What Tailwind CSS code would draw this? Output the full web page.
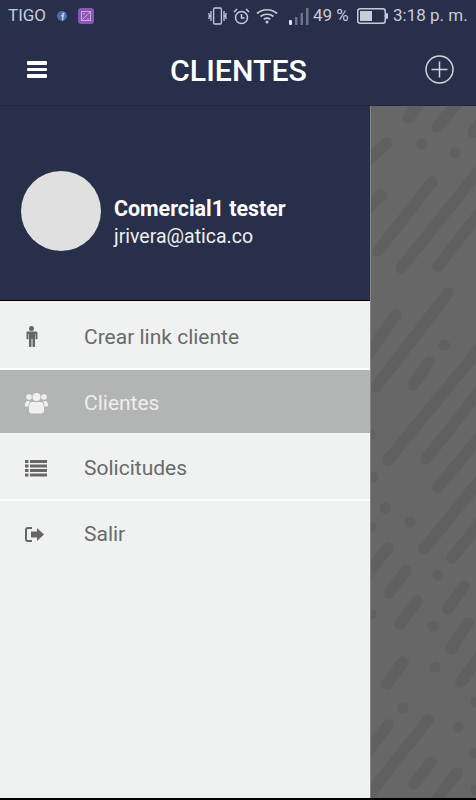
<!DOCTYPE html>
<html lang="es">
<head>
    <meta charset="UTF-8">
    <meta name="viewport" content="width=device-width, initial-scale=1.0">
    <title>Clientes</title>
    <script src="https://cdn.jsdelivr.net/npm/@tailwindcss/browser@4"></script>
</head>
<body class="bg-black font-['Roboto',sans-serif]">
    <div class="w-[476px] h-[798px] flex flex-col overflow-hidden">
        <!-- Status bar + toolbar -->
        <header class="h-[106px] shrink-0 bg-[#272f4a] border-b border-[#222a42]">
            <div class="h-8 flex items-center text-[#c9ccd6] text-[17px] pl-2 pr-2">
                <span class="w-[38px]">TIGO</span>
                <svg class="ml-[11px]" width="10" height="10" viewBox="0 0 10 10"><circle cx="5" cy="5" r="5" fill="#4a6cae"/><path d="M5.2 9.5V5.6H4.2V4.2h1V3.3c0-1 .6-1.5 1.5-1.5h.8v1.3h-.6c-.4 0-.5.2-.5.5v.6h1.1l-.2 1.4h-.9v3.9z" fill="#d5dbe8"/></svg>
                <svg class="ml-[11px]" width="16" height="16" viewBox="0 0 16 16"><rect width="16" height="16" rx="3" fill="#8a56b8"/><rect x="3.5" y="3.5" width="9" height="9" fill="none" stroke="#c5a9dd"/><path d="M4 12l8-8M5 6h2M9 11h2" stroke="#c5a9dd"/></svg>
                <svg class="ml-[114px]" width="19" height="18" viewBox="0 0 19 18" fill="none" stroke="#c9ccd6" stroke-width="1.3"><rect x="5.6" y="1" width="7.8" height="16" rx="1.2"/><path d="M3 4v10M1 6l0 2 1 1-1 1 0 2M16 4v10M18 6v2l-1 1 1 1v2"/></svg>
                <svg class="ml-[6px]" width="17" height="17" viewBox="0 0 17 17" fill="none" stroke="#c9ccd6" stroke-width="1.5"><circle cx="8.5" cy="9.5" r="6"/><path d="M8.5 6v4h3M1 4l3-3M16 4l-3-3"/></svg>
                <svg class="ml-[6px]" width="22" height="16" viewBox="0 0 22 16" fill="none" stroke="#c9ccd6" stroke-width="1.7"><path d="M1 5.5c5.500-5 14.500-5 20 0M4.500 8.500c3.500-3 9.500-3 13 0M7.800 11.300c2-1.500 4.400-1.500 6.400 0"/><circle cx="11" cy="14" r="1.500" fill="#c9ccd6" stroke="none"/></svg>
                <svg class="ml-[11px]" width="20" height="17" viewBox="0 0 20 17"><rect x="0" y="12" width="3" height="5" rx="1" fill="#e4e6ec"/><rect x="6" y="9" width="2.500" height="8" fill="#6e7488"/><rect x="11.500" y="5" width="2.500" height="12" fill="#6e7488"/><rect x="17" y="0" width="2.500" height="17" fill="#6e7488"/></svg>
                <span class="ml-[4px] w-[38px] whitespace-nowrap">49 %</span>
                <svg class="ml-[6px]" width="31" height="16" viewBox="0 0 31 16"><rect x="0.750" y="0.750" width="27.500" height="14.500" rx="2.500" fill="none" stroke="#c9ccd6" stroke-width="1.500"/><rect x="3" y="3" width="12" height="10" fill="#c9ccd6"/><rect x="29" y="5" width="2" height="6" rx="1" fill="#c9ccd6"/></svg>
                <span class="ml-[5px] whitespace-nowrap">3:18 p. m.</span>
            </div>
            <div class="h-[73px] grid grid-cols-[1fr_auto_1fr] items-center pl-[27px] pr-[22px]">
                <div class="w-5 mt-[2px] flex flex-col gap-[3px]">
                    <div class="h-[3.500px] rounded-[1px] bg-white"></div>
                    <div class="h-[3.500px] rounded-[1px] bg-white"></div>
                    <div class="h-[3.500px] rounded-[1px] bg-white"></div>
                </div>
                <h1 class="text-white text-[30.300px] font-medium leading-none mt-[5px] -ml-[5px] pl-[1px]">CLIENTES</h1>
                <svg class="justify-self-end mt-[1px]" width="29" height="29" viewBox="0 0 29 29" fill="none" stroke="#d4d5da" stroke-width="1.500"><circle cx="14.500" cy="14.500" r="13.500"/><path d="M14.500 6.500v16M6.500 14.500h16"/></svg>
            </div>
        </header>

        <div class="flex-1 flex min-h-0">
            <!-- Drawer -->
            <aside class="w-[370px] shrink-0 flex flex-col bg-[#f0f2f1]">
                <div class="h-[195px] bg-[#272f4a] flex items-center pl-[21px] pt-4 gap-[13px] border-b border-black">
                    <div class="w-20 h-20 rounded-full bg-[#e0e0e0]"></div>
                    <div class="text-white pt-6">
                        <div class="text-[21.400px] font-bold leading-6">Comercial1 tester</div>
                        <div class="text-[19.500px] leading-6 mt-1 text-[#f0f0f0]">jrivera@atica.co</div>
                    </div>
                </div>
                <nav class="text-[21px] text-[#6a6a6a]">
                    <a class="h-[69px] pt-1 flex items-center border-b-2 border-white">
                        <span class="w-[84px] pl-[25px]">
                            <svg width="13" height="21" viewBox="0 0 13 21" fill="#666666"><circle cx="6.500" cy="2.500" r="2.500"/><path d="M2 5.500h9a1.500 1.500 0 0 1 1.500 1.500v5.500a1 1 0 0 1-2 0V8h-.5v12a1 1 0 0 1-2.500 0v-7h-1v7a1 1 0 0 1-2.500 0V8h-.5v4.500a1 1 0 0 1-2 0V7A1.500 1.500 0 0 1 2 5.500z"/></svg>
                        </span>
                        <span class="mt-[2px]">Crear link cliente</span>
                    </a>
                    <a class="h-[65px] pt-[2px] flex items-center bg-[#b3b5b4] border-b-2 border-[#f4f5f5] text-[#eeeeee]">
                        <span class="w-[84px] pl-[25px]">
                            <svg width="23" height="22" viewBox="0 0 23 22" fill="#f0f0f0"><circle cx="4" cy="5" r="2.800"/><circle cx="19" cy="5" r="2.800"/><circle cx="11.500" cy="5" r="4"/><path d="M0 13.500c0-3 1-4.500 3-4.500l2 .5c-1 1-1.500 3-1.500 5H1c-.6 0-1-.4-1-1zM23 13.500c0-3-1-4.500-3-4.500l-2 .5c1 1 1.500 3 1.500 5H22c.6 0 1-.4 1-1zM7 10h9c2 0 3 2 3 6v3c0 1.500-1 2.500-2.500 2.500h-10C5 21.500 4 20.500 4 19v-3c0-4 1-6 3-6z"/></svg>
                        </span>
                        <span class="mt-[2px]">Clientes</span>
                    </a>
                    <a class="h-[66px] pt-[2px] flex items-center border-b-2 border-white">
                        <span class="w-[84px] pl-[25px]">
                            <svg width="22" height="17" viewBox="0 0 22 17" fill="#666666"><path d="M0 0h3.500v3H0zM5 0h17v3H5zM0 4.500h3.500v3H0zM5 4.500h17v3H5zM0 9h3.500v3H0zM5 9h17v3H5zM0 13.500h3.500v3H0zM5 13.500h17v3H5z"/></svg>
                        </span>
                        <span class="mt-[2px]">Solicitudes</span>
                    </a>
                    <a class="h-[66px] flex items-center">
                        <span class="w-[84px] pl-[25px]">
                            <svg width="19" height="15" viewBox="0 0 19 15" fill="#666666"><path d="M12 1l7 6.500-7 6.500v-3.500H6v-6h6z"/><path d="M7 1H3a2 2 0 0 0-2 2v9a2 2 0 0 0 2 2h4" fill="none" stroke="#666666" stroke-width="2"/></svg>
                        </span>
                        <span class="mt-[2px]">Salir</span>
                    </a>
                </nav>
            </aside>

            <!-- Dimmed background behind the drawer -->
            <div class="flex-1 bg-[#676767] border-l border-[#868686] overflow-hidden">
                <svg width="106" height="692" viewBox="371 106 106 692" fill="none" stroke="#606060" stroke-width="11.500" stroke-linecap="round">
                    <path d="M408 118L424 98M437 127L460 100M473 132L490 112M355 172L387 143M378 251L432 182M355 222L381 195M401 268L490 157M438 266L490 200M376 387L448 293M355 372L396 315M413 385L429 362M388 460L490 336M426 459L490 378M438 487L490 425M424 549L490 468M452 558L490 510M355 590L388 548M389 593L406 571M448 609L464 586M400 624L417 601M451 649L468 623M461 682L490 642M387 684L403 662M355 768L388 725M355 812L428 720M414 784L431 762M438 798L457 773"/>
                    <g fill="#606060" stroke="none">
                        <circle cx="422" cy="144" r="5.500"/><circle cx="455" cy="153" r="5.500"/><circle cx="444" cy="345" r="5.500"/><circle cx="370" cy="435" r="5.500"/><circle cx="373" cy="477" r="5.500"/><circle cx="385" cy="508" r="5.500"/><circle cx="410" cy="522" r="5.500"/><circle cx="371" cy="527" r="5.500"/><circle cx="438" cy="575" r="5.500"/><circle cx="433" cy="626" r="5.500"/><circle cx="371" cy="614" r="5.500"/><circle cx="435" cy="667" r="5.500"/><circle cx="403" cy="708" r="5.500"/><circle cx="476" cy="702" r="5.500"/><circle cx="458" cy="727" r="5.500"/><circle cx="474" cy="753" r="5.500"/><circle cx="476" cy="790" r="5.500"/>
                    </g>
                </svg>
            </div>
        </div>
    </div>
</body>
</html>
